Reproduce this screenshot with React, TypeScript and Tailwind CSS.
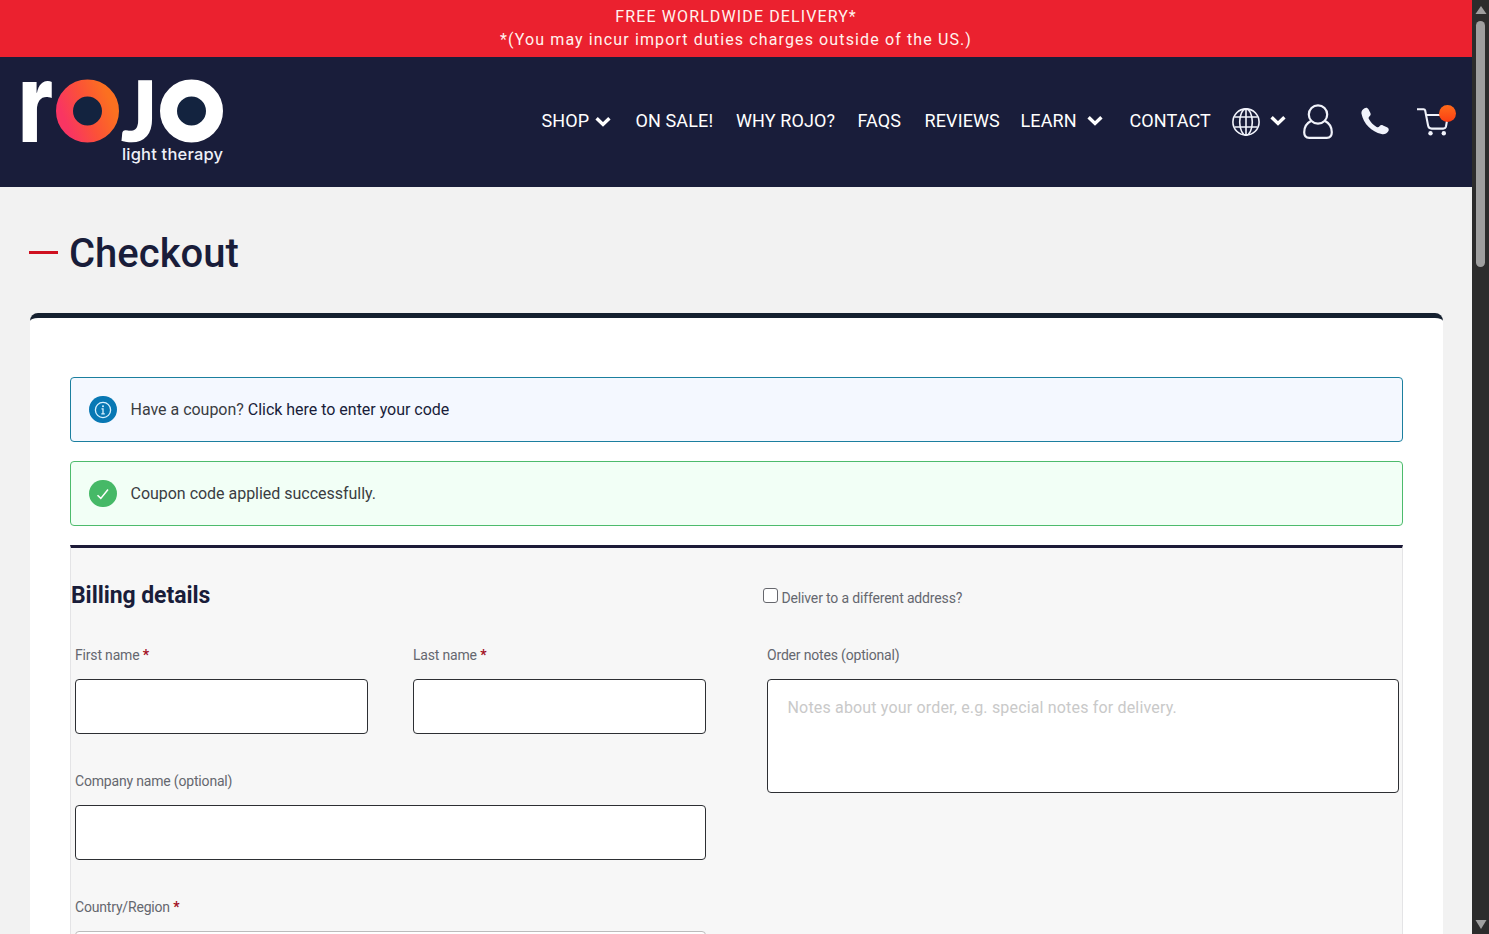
import type { ReactNode } from "react";

const navLinks = [
  { label: "SHOP", width: "w-[94px]", chevron: "ml-[6px] mt-[3px]" },
  { label: "ON SALE!", width: "w-[100.5px]" },
  { label: "WHY ROJO?", width: "w-[121.5px]" },
  { label: "FAQS", width: "w-[67px]" },
  { label: "REVIEWS", width: "w-[96px]" },
  { label: "LEARN", width: "w-[109px]", chevron: "ml-[10px] mt-[2px]" },
  { label: "CONTACT", width: "w-[102px]" },
];

function Chevron({ className = "" }: { className?: string }) {
  return (
    <svg className={className} width="16" height="12" viewBox="0 0 16 12" fill="none">
      <path d="M1.6 2.2 8 8.4l6.4-6.2" stroke="white" strokeWidth="3.4" />
    </svg>
  );
}

function Logo() {
  return (
    <svg className="overflow-visible" width="204" height="90" viewBox="0 0 204 90">
      <defs>
        <linearGradient id="ring" x1="0" y1="0.7" x2="1" y2="0.3">
          <stop offset="0" stopColor="#f93562" />
          <stop offset="0.5" stopColor="#fb5138" />
          <stop offset="1" stopColor="#fb7020" />
        </linearGradient>
      </defs>
      <text transform="translate(-4 65) scale(0.76 1)" fontFamily="Inter, sans-serif" fontWeight="800" fontSize="110" fill="white">
        r
      </text>
      <circle cx="65.500" cy="34" r="23" fill="#13233f" stroke="url(#ring)" strokeWidth="17" />
      <text
        transform="translate(99.5 63.5)"
        fontFamily="Lato, sans-serif"
        fontWeight="900"
        fontSize="82"
        fill="white"
        stroke="white"
        strokeWidth="1.500"
      >
        J
      </text>
      <circle cx="169.500" cy="34" r="23" fill="#13233f" stroke="white" strokeWidth="17" />
      <text x="100" y="82.500" textLength="101" fontFamily="Inter, sans-serif" fontWeight="500" fontSize="16.500" fill="#eef0f8">
        light therapy
      </text>
    </svg>
  );
}

function Header() {
  return (
    <header className="flex h-[130px] justify-between bg-[#191d3a] pl-[22px]">
      <div className="pt-[20px]">
        <Logo />
      </div>
      <nav className="flex h-[126px] w-[930.5px] items-center text-[18px] text-white">
        {navLinks.map((link) => (
          <a key={link.label} className={`flex shrink-0 items-center tracking-[0.12px] whitespace-nowrap ${link.width}`}>
            {link.label}
            {link.chevron && <Chevron className={link.chevron} />}
          </a>
        ))}
        <svg className="mt-[3px] shrink-0" width="28" height="28" viewBox="0 0 28 28" fill="none" stroke="#f1f3fb" strokeWidth="1.600">
          <circle cx="14" cy="14" r="13.100" />
          <ellipse cx="14" cy="14" rx="6.300" ry="13.100" />
          <path d="M14 1v26M2.500 9h23M2.500 19h23" />
        </svg>
        <Chevron className="ml-[10px] mt-px shrink-0" />
        <svg className="ml-[17px] mt-[3px] shrink-0" width="30" height="35" viewBox="0 0 30 35" fill="none" stroke="#f1f3fb" strokeWidth="2.200">
          <circle cx="15" cy="10.500" r="9.200" />
          <path d="M8.300 16.800C4 19 1.200 23.500 1.200 28.300c0 3.200 1.800 5.500 5 5.500h17.600c3.200 0 5-2.300 5-5.500 0-4.800-2.800-9.300-7.100-11.500" />
        </svg>
        <svg className="ml-[28px] mt-[2px] shrink-0" width="28" height="28" viewBox="0 0 28 28" fill="#f1f3fb">
          <path d="M3.500 1.200C5 .2 6.700.6 7.500 2.200L9.400 6c.6 1.300.3 2.500-.8 3.300-1 .8-1.300 1.500-.7 2.700 1.700 3.300 4.300 6.100 7.700 7.900 1.200.6 2.100.4 2.900-.6.9-1.200 2.100-1.500 3.500-.9l4 1.900c1.700.8 2.200 2.300 1.300 3.900-1.500 2.500-3.900 3.500-6.800 2.900C10.600 25 2.300 16.600.5 6.800.1 4.400 1.200 2.600 3.500 1.200Z" />
        </svg>
        <div className="relative ml-[28.500px] mt-[3px] h-[28px] w-[32px] shrink-0">
          <svg width="32" height="28" viewBox="0 0 32 28" fill="none" stroke="#f1f3fb" strokeWidth="2.100">
            <path d="M0 1.200h6.500c1 0 1.500.5 1.700 1.400l2.900 15c.4 2 1.500 3 3.500 3h11.600c1.500 0 2.500-.8 2.800-2.200l2-11.400H9" />
            <circle cx="13.500" cy="25.300" r="2.200" fill="#f1f3fb" stroke="none" />
            <circle cx="26.800" cy="25.300" r="2.200" fill="#f1f3fb" stroke="none" />
          </svg>
          <span className="absolute -top-[3px] left-[22px] size-[17px] rounded-full bg-linear-to-b from-[#ff6a1a] to-[#fb3c14]" />
        </div>
      </nav>
    </header>
  );
}

function Notice({ type, children }: { type: "info" | "success"; children: ReactNode }) {
  const info = type === "info";
  return (
    <div
      className={`flex h-[65px] items-center rounded-[4px] border pl-[18px] text-[16px] tracking-[-0.02px] text-[#3a3d42] ${
        info ? "border-[#1b7f9f] bg-[#f4f8ff]" : "border-[#4dbb6c] bg-[#f2fff6]"
      }`}
    >
      <span className={`mr-[13.5px] flex h-[27px] w-[28px] items-center justify-center rounded-full ${info ? "bg-[#0878b4]" : "bg-[#46b967]"}`}>
        {info ? (
          <svg width="18" height="18" viewBox="0 0 18 18" fill="none" stroke="#d8f1ff" strokeWidth="1.300">
            <circle cx="9" cy="9" r="7.600" />
            <path d="M7.500 7.800H9v5M7.300 12.900h3.500" />
            <circle cx="9" cy="5.200" r="1" fill="#d8f1ff" stroke="none" />
          </svg>
        ) : (
          <svg width="14" height="14" viewBox="0 0 14 14" fill="none" stroke="white" strokeWidth="1.500">
            <path d="M1.500 8.200 4.800 11.400 12 2.500" />
          </svg>
        )}
      </span>
      <span>{children}</span>
    </div>
  );
}

function Label({ children, required }: { children: ReactNode; required?: boolean }) {
  return (
    <label className="block h-[32px] text-[14px] leading-[16px] tracking-[-0.18px] text-[#65676f]">
      {children}
      {required && <b className="text-[#a30f24]"> *</b>}
    </label>
  );
}

function Field({ label, required }: { label: string; required?: boolean }) {
  return (
    <div className="h-[126px] flex-1">
      <Label required={required}>{label}</Label>
      <input className="block h-[55px] w-full rounded-[4px] border border-[#2d2f33] bg-white px-5" />
    </div>
  );
}

function BillingForm() {
  return (
    <section className="mt-[19px] flex h-[500px] border-x border-t-[3px] border-x-[#e4e4e6] border-t-[#1c1a37] bg-[#f7f7f7]">
      <div className="w-[635px]">
        <h2 className="h-[99px] pt-[33px] text-[23px] leading-[30px] font-bold tracking-[-0.07px] text-[#191d3a]">Billing details</h2>
        <div className="pl-1">
          <div className="flex gap-[45px]">
            <Field label="First name" required />
            <Field label="Last name" required />
          </div>
          <Field label="Company name (optional)" />
          <Label required>Country/Region</Label>
          <div className="h-[55px] rounded-[4px] border border-[#bcbcbc] bg-white" />
        </div>
      </div>
      <div className="ml-[57px] w-[636px]">
        <label className="flex h-[99px] pt-[40px] text-[14px] leading-[20px] tracking-[-0.15px] text-[#65676f]">
          <span className="mr-[3.500px] size-[15px] rounded-[3px] border border-[#66676d] bg-white" />
          Deliver to a different address?
        </label>
        <div className="pl-1">
          <Label>Order notes (optional)</Label>
          <textarea
            className="block h-[114px] w-[632px] resize-none rounded-[4px] border border-[#2d2f33] bg-white px-[19.500px] py-[16px] text-[16px] leading-[24px] tracking-[0.17px] placeholder:text-[#c9c9c9]"
            placeholder="Notes about your order, e.g. special notes for delivery."
          />
        </div>
      </div>
    </section>
  );
}

function Scrollbar() {
  return (
    <div className="flex w-[17px] flex-col items-center justify-between bg-[#2c2c2c]">
      <div className="flex flex-col items-center">
        <svg className="mt-[6px]" width="12" height="8" viewBox="0 0 12 8" fill="#9f9f9f">
          <path d="M6 0 11.500 8H.5Z" />
        </svg>
        <div className="mt-[7px] h-[246px] w-[9px] rounded-full bg-[#9f9f9f]" />
      </div>
      <svg className="mb-[5px]" width="12" height="9" viewBox="0 0 12 9" fill="#9f9f9f">
        <path d="M.5 0h11L6 9Z" />
      </svg>
    </div>
  );
}

export default function App() {
  return (
    <div className="flex h-[934px] w-[1489px] overflow-hidden bg-[#f2f2f2] font-['Roboto',sans-serif]">
      <div className="w-[1472px] overflow-hidden">
        {/* Promo bar */}
        <div className="h-[57px] bg-[#eb212f] pt-[5px] text-center text-[16px] leading-[23px] tracking-[1.12px] text-[#fff3ee]">
          <p>FREE WORLDWIDE DELIVERY*</p>
          <p>*(You may incur import duties charges outside of the US.)</p>
        </div>
        <Header />

        <main className="pl-[29px]">
          <h1 className="flex h-[126px] items-center pt-[5px] text-[40px] font-medium text-[#191d3a]">
            <span className="mr-[11px] h-[3px] w-[29px] bg-[#cf1020]" />
            <span className="pt-[2px]">Checkout</span>
          </h1>
          <div className="ml-px w-[1413px] rounded-t-[8px] border-t-[5px] border-[#15202f] bg-white px-10 pt-[59px]">
            <Notice type="info">
              Have a coupon? <a className="text-[#191d3a]">Click here to enter your code</a>
            </Notice>
            <div className="h-[19px]" />
            <Notice type="success">Coupon code applied successfully.</Notice>
            <BillingForm />
          </div>
        </main>
      </div>
      <Scrollbar />
    </div>
  );
}
